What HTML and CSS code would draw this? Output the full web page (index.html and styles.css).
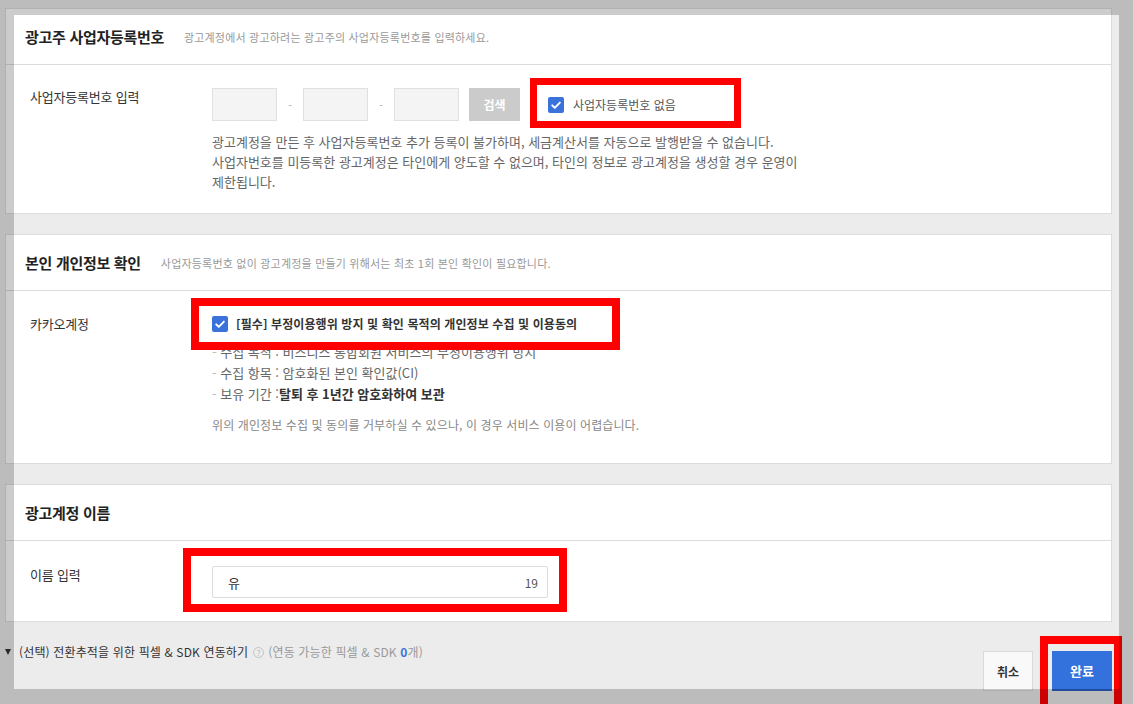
FILE: index.html
```html
<!DOCTYPE html>
<html lang="ko">
<head>
<meta charset="utf-8">
<title>광고계정 만들기</title>
<link rel="stylesheet" href="styles.css">
</head>
<body>
<div class="page">
  <section class="card">
    <header class="card-head">
      <h2 class="card-title">광고주 사업자등록번호</h2>
      <p class="card-sub">광고계정에서 광고하려는 광고주의 사업자등록번호를 입력하세요.</p>
    </header>
    <div class="card-body body-biz">
      <div class="row">
        <div class="label">사업자등록번호 입력</div>
        <div class="field">
          <div class="biz-row">
            <span class="biz-input"></span>
            <span class="dash">-</span>
            <span class="biz-input"></span>
            <span class="dash">-</span>
            <span class="biz-input"></span>
            <button class="btn-search" type="button">검색</button>
            <label class="check">
              <span class="check-box"><svg width="16" height="16" viewBox="0 0 16 16"><rect width="16" height="16" rx="2" fill="#3a72db"/><path d="M4.2 8.3 L6.8 10.9 L11.9 5.6" fill="none" stroke="#fff" stroke-width="1.9" stroke-linecap="round" stroke-linejoin="round"/></svg></span>
              <span class="check-text">사업자등록번호 없음</span>
            </label>
          </div>
          <p class="desc">광고계정을 만든 후 사업자등록번호 추가 등록이 불가하며, 세금계산서를 자동으로 발행받을 수 없습니다.<br>사업자번호를 미등록한 광고계정은 타인에게 양도할 수 없으며, 타인의 정보로 광고계정을 생성할 경우 운영이 제한됩니다.</p>
        </div>
      </div>
    </div>
  </section>

  <section class="card">
    <header class="card-head">
      <h2 class="card-title">본인 개인정보 확인</h2>
      <p class="card-sub">사업자등록번호 없이 광고계정을 만들기 위해서는 최초 1회 본인 확인이 필요합니다.</p>
    </header>
    <div class="card-body body-id">
      <div class="row">
        <div class="label">카카오계정</div>
        <div class="field">
          <label class="check check-agree">
            <span class="check-box"><svg width="16" height="16" viewBox="0 0 16 16"><rect width="16" height="16" rx="2" fill="#3a72db"/><path d="M4.2 8.3 L6.8 10.9 L11.9 5.6" fill="none" stroke="#fff" stroke-width="1.9" stroke-linecap="round" stroke-linejoin="round"/></svg></span>
            <span class="agree-text">[필수] 부정이용행위 방지 및 확인 목적의 개인정보 수집 및 이용동의</span>
          </label>
          <ul class="bullets">
            <li><span class="bdash">-</span> 수집 목적 : 비즈니스 통합회원 서비스의 부정이용행위 방지</li>
            <li><span class="bdash">-</span> 수집 항목 : 암호화된 본인 확인값(CI)</li>
            <li><span class="bdash">-</span> 보유 기간 :<strong>탈퇴 후 1년간 암호화하여 보관</strong></li>
          </ul>
          <p class="note">위의 개인정보 수집 및 동의를 거부하실 수 있으나, 이 경우 서비스 이용이 어렵습니다.</p>
        </div>
      </div>
    </div>
  </section>

  <section class="card">
    <header class="card-head">
      <h2 class="card-title">광고계정 이름</h2>
    </header>
    <div class="card-body body-name">
      <div class="row">
        <div class="label">이름 입력</div>
        <div class="field">
          <div class="name-input"><span class="name-value">유</span><span class="name-count">19</span></div>
        </div>
      </div>
    </div>
  </section>

  <div class="footer">
    <div class="toggle">
      <span class="tri"></span>
      <span class="toggle-text">(선택) 전환추적을 위한 픽셀 &amp; SDK 연동하기</span>
      <span class="help">?</span>
      <span class="toggle-info">(연동 가능한 픽셀 &amp; SDK <b class="num">0</b>개)</span>
    </div>
    <div class="actions">
      <button class="btn-cancel" type="button">취소</button>
      <button class="btn-ok" type="button">완료</button>
    </div>
  </div>
</div>

<div class="mark mark-1"></div>
<div class="mark mark-2"></div>
<div class="mark mark-3"></div>
<div class="mark mark-4"></div>
<div class="spot"></div>
</body>
</html>
```

FILE: styles.css
```css
* { box-sizing: border-box; }

body {
  margin: 0;
  width: 1133px;
  height: 704px;
  overflow: hidden;
  position: relative;
  background: #ececec;
  font-family: "Noto Sans CJK KR", "Noto Sans", sans-serif;
  color: #333;
}

.page {
  padding: 8px 21px 0 5px;
}

.card {
  background: #fff;
  border: 1px solid #dcdcdc;
}

.card + .card {
  margin-top: 20px;
}

.card-head {
  height: 56px;
  border-bottom: 1px solid #dcdcdc;
  display: flex;
  align-items: center;
  gap: 20px;
  padding-left: 19px;
}

.card-title {
  margin: 0;
  font-size: 15px;
  font-weight: 700;
  color: #222;
  letter-spacing: -0.3px;
}

.card-sub {
  margin: 0;
  font-size: 11px;
  color: #999;
  letter-spacing: 0.2px;
}

.card-body {
  padding: 23px 24px 21px;
}

.body-id {
  padding: 24px 24px 29px;
}

.body-name {
  padding: 25px 24px 23px;
}

.row {
  display: flex;
}

.label {
  width: 182px;
  flex: none;
  font-size: 13px;
  line-height: 18px;
  color: #333;
  letter-spacing: -0.2px;
}

.field {
  flex: 1;
}

.biz-row {
  display: flex;
  align-items: center;
}

.biz-input {
  width: 65px;
  height: 33px;
  background: #f4f4f4;
  border: 1px solid #e0e0e0;
}

.dash {
  width: 26px;
  text-align: center;
  font-size: 12px;
  color: #bbb;
}

.btn-search {
  margin-left: 10px;
  width: 51px;
  height: 33px;
  border: none;
  background: #cbcbcb;
  color: #fff;
  font-family: inherit;
  font-size: 12px;
  font-weight: 700;
  padding: 0;
}

.check {
  display: flex;
  align-items: center;
  gap: 9px;
  margin-left: 28px;
}

.check-box {
  width: 16px;
  height: 16px;
  display: block;
}

.check-box svg {
  display: block;
}

.check-text {
  font-size: 12px;
  color: #555;
}

.desc {
  margin: 11px 0 0;
  width: 596px;
  font-size: 13px;
  line-height: 20px;
  color: #666;
}

.check-agree {
  margin-left: 0;
  gap: 8px;
  line-height: 18px;
}

.agree-text {
  font-size: 12px;
  font-weight: 700;
  color: #333;
  letter-spacing: 0.1px;
}

.bullets {
  list-style: none;
  margin: 8px 0 0;
  padding: 0;
  font-size: 13px;
  line-height: 21px;
  color: #666;
}

.bdash {
  color: #bbb;
}

.bullets strong {
  color: #333;
  font-weight: 700;
}

.note {
  margin: 12px 0 0;
  font-size: 12px;
  line-height: 18px;
  color: #888;
  letter-spacing: 0.1px;
}

.name-input {
  width: 336px;
  height: 32px;
  border: 1px solid #dcdcdc;
  border-radius: 2px;
  display: flex;
  align-items: center;
  justify-content: space-between;
  padding: 0 9px 0 15px;
}

.name-value {
  font-size: 13px;
  color: #333;
}

.name-count {
  font-size: 12px;
  color: #555;
}

.footer {
  display: flex;
  justify-content: space-between;
  align-items: flex-start;
  padding-top: 21px;
}

.toggle {
  display: flex;
  align-items: center;
  font-size: 12px;
  line-height: 18px;
  letter-spacing: 0.15px;
}

.tri {
  width: 0;
  height: 0;
  border-left: 3.5px solid transparent;
  border-right: 3.5px solid transparent;
  border-top: 6px solid #333;
  margin-right: 8px;
}

.toggle-text {
  color: #333;
}

.help {
  width: 11px;
  height: 11px;
  border: 1px solid #c4c4c4;
  border-radius: 50%;
  color: #bbb;
  font-size: 8px;
  line-height: 9px;
  text-align: center;
  margin: 0 4px 0 5px;
  letter-spacing: 0;
}

.toggle-info {
  color: #999;
}

.num {
  color: #3a72db;
  font-weight: 700;
}

.actions {
  display: flex;
  gap: 19px;
  margin-top: 8px;
}

.btn-cancel {
  width: 50px;
  height: 40px;
  background: #f9f9f9;
  border: 1px solid #d9d9d9;
  color: #333;
  font-family: inherit;
  font-size: 12px;
  font-weight: 700;
  padding: 0;
}

.btn-ok {
  width: 60px;
  height: 40px;
  background: #3371dc;
  border: none;
  border-bottom: 2px solid #2a5fc2;
  color: #fff;
  font-family: inherit;
  font-size: 13px;
  font-weight: 700;
  padding: 0;
}

.mark {
  position: absolute;
  border: 8px solid #ff0000;
  z-index: 5;
}

.mark-1 { left: 530px; top: 78px; width: 211px; height: 50px; border-width: 7px; }
.mark-2 { left: 191px; top: 298px; width: 429px; height: 52px; }
.mark-3 { left: 183px; top: 548px; width: 384px; height: 64px; }
.mark-4 { left: 1040px; top: 636px; width: 82px; height: 80px; }

.spot {
  position: absolute;
  left: 14px;
  top: 15px;
  width: 1105px;
  height: 674px;
  box-shadow: 0 0 0 2000px rgba(0, 0, 0, 0.2);
  pointer-events: none;
  z-index: 10;
}
```
